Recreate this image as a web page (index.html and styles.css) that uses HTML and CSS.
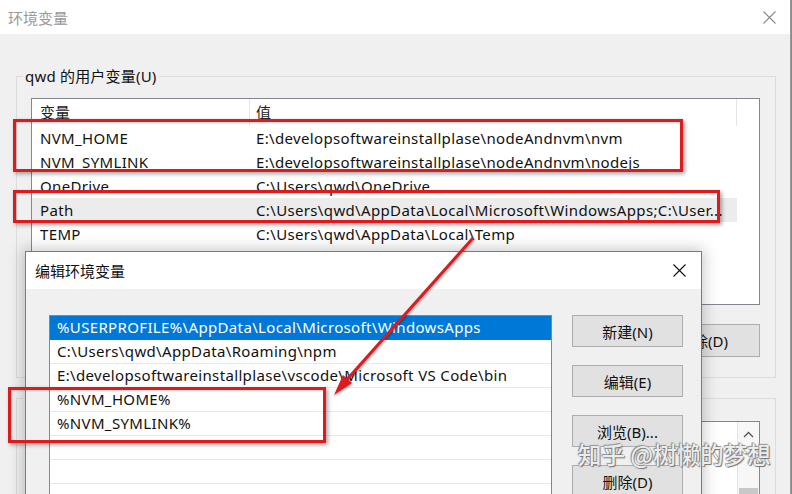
FILE: index.html
```html
<!DOCTYPE html>
<html lang="zh-CN">
<head>
<meta charset="utf-8">
<title>环境变量</title>
<link rel="stylesheet" href="styles.css">
</head>
<body>
<div class="screen">
  <div class="win">
    <div class="titlebar">
      <span class="title">环境变量</span>
      <svg class="x-icon x-gray" width="13" height="13" viewBox="0 0 13 13"><path d="M0.5 0.5L12.5 12.5M12.5 0.5L0.5 12.5"/></svg>
    </div>
    <div class="win-body">
      <div class="group">
        <div class="group-label">qwd 的用户变量(U)</div>
        <div class="listview">
          <div class="lv-head"><div class="c1">变量</div><div class="c2">值</div></div>
          <div class="lv-row"><div class="c1">NVM_HOME</div><div class="c2">E:\developsoftwareinstallplase\nodeAndnvm\nvm</div></div>
          <div class="lv-row"><div class="c1">NVM_SYMLINK</div><div class="c2">E:\developsoftwareinstallplase\nodeAndnvm\nodejs</div></div>
          <div class="lv-row"><div class="c1">OneDrive</div><div class="c2">C:\Users\qwd\OneDrive</div></div>
          <div class="lv-row sel"><div class="c1">Path</div><div class="c2">C:\Users\qwd\AppData\Local\Microsoft\WindowsApps;C:\User...</div></div>
          <div class="lv-row"><div class="c1">TEMP</div><div class="c2">C:\Users\qwd\AppData\Local\Temp</div></div>
        </div>
        <div class="btn-row">
          <button class="btn">新建(N)...</button>
          <button class="btn">编辑(E)...</button>
          <button class="btn">删除(D)</button>
        </div>
      </div>
      <div class="group group2">
        <div class="group-label">系统变量(S)</div>
        <div class="listview lv2">
          <div class="lv2-content"></div>
          <div class="scrollbar">
            <svg class="chev" width="11" height="7" viewBox="0 0 11 7"><path d="M1 6L5.5 1.5L10 6"/></svg>
            <div class="thumb"></div>
          </div>
        </div>
      </div>
    </div>
  </div>

  <div class="dialog">
    <div class="dlg-title">
      <span>编辑环境变量</span>
      <svg class="x-icon" width="13" height="13" viewBox="0 0 13 13"><path d="M0.5 0.5L12.5 12.5M12.5 0.5L0.5 12.5"/></svg>
    </div>
    <div class="dlg-body">
      <div class="dlg-list">
        <div class="dl-row sel">%USERPROFILE%\AppData\Local\Microsoft\WindowsApps</div>
        <div class="dl-row">C:\Users\qwd\AppData\Roaming\npm</div>
        <div class="dl-row">E:\developsoftwareinstallplase\vscode\Microsoft VS Code\bin</div>
        <div class="dl-row">%NVM_HOME%</div>
        <div class="dl-row">%NVM_SYMLINK%</div>
        <div class="dl-row"></div>
        <div class="dl-row"></div>
        <div class="dl-row"></div>
      </div>
      <div class="dlg-btns">
        <button class="btn dbtn">新建(N)</button>
        <button class="btn dbtn">编辑(E)</button>
        <button class="btn dbtn">浏览(B)...</button>
        <button class="btn dbtn">删除(D)</button>
      </div>
    </div>
  </div>

  <div class="mark mark1"></div>
  <div class="mark mark2"></div>
  <div class="mark mark3"></div>

  <svg class="arrow" width="792" height="494" viewBox="0 0 792 494">
    <line x1="473" y1="238" x2="343" y2="384"/>
    <polygon points="334,395 352,383 343,375"/>
  </svg>

  <div class="watermark">知乎 @树懒的梦想</div>
</div>
</body>
</html>
```

FILE: styles.css
```css
* { box-sizing: border-box; }

body {
  margin: 0;
  width: 792px;
  height: 494px;
  overflow: hidden;
  background: #fff;
  font-family: "Noto Sans", "Noto Sans CJK SC", sans-serif;
  font-size: 15px;
  color: #000;
}

.screen {
  position: relative;
  width: 792px;
  height: 494px;
  overflow: hidden;
  background: #8a8a8a;
}

.win {
  width: 791px;
  height: 494px;
  border-right: 1px solid #9a9a9a;
  background: #f0f0f0;
}

.titlebar {
  height: 34px;
  background: #fff;
  display: flex;
  align-items: center;
  justify-content: space-between;
  padding: 0 14px 0 8px;
}

.title {
  color: #9a9a9a;
  font-family: "Noto Sans CJK SC", sans-serif;
}

.x-icon path {
  stroke: #111;
  stroke-width: 1.1;
  fill: none;
}

.x-gray path { stroke: #8a8a8a; }

.win-body { padding-top: 42px; }

.group {
  border: 1px solid #dcdcdc;
  margin: 0 14px 0 16px;
  padding: 0 15px 20px 14px;
}

.group-label {
  width: fit-content;
  margin: -11px 0 0 -8px;
  padding: 0 2px;
  line-height: 20px;
  background: #f0f0f0;
  color: #111;
  letter-spacing: 0.2px;
}

.listview {
  margin-top: 12px;
  height: 207px;
  border: 1px solid #828790;
  background: #fff;
}

.lv-head {
  display: flex;
  width: 705px;
  height: 27px;
  line-height: 27px;
  border-right: 1px solid #e5e5e5;
  color: #222;
}

.lv-head .c1 { border-right: 1px solid #e5e5e5; }

.c1 {
  width: 218px;
  flex: none;
  padding-left: 8px;
  white-space: nowrap;
}

.c2 {
  flex: 1;
  min-width: 0;
  padding-left: 6px;
  white-space: nowrap;
  overflow: hidden;
}

.lv-row {
  display: flex;
  width: 705px;
  height: 24px;
  line-height: 24px;
  color: #111;
  letter-spacing: 0.35px;
}

.lv-row.sel { background: #ececec; }

.btn-row {
  display: flex;
  justify-content: flex-end;
  gap: 10px;
  margin-top: 19px;
}

.btn {
  width: 114px;
  height: 33px;
  margin: 0;
  padding: 0;
  background: #e1e1e1;
  border: 1px solid #adadad;
  font-family: "Noto Sans", "Noto Sans CJK SC", sans-serif;
  font-size: 15px;
  color: #111;
}

.group2 { margin-top: 20px; padding-bottom: 0; border-bottom: none; }

.lv2 {
  margin-top: 13px;
  height: 120px;
  display: flex;
  border-bottom: none;
}

.lv2-content { flex: 1; }

.scrollbar {
  width: 22px;
  flex: none;
  background: #f7f7f7;
  border-left: 1px solid #e3e3e3;
  display: flex;
  flex-direction: column;
  align-items: center;
  padding-top: 9px;
}

.chev path {
  stroke: #555;
  stroke-width: 1.3;
  fill: none;
}

.thumb {
  margin-top: 50px;
  width: 19px;
  height: 40px;
  background: #c8c8c8;
}

/* Edit dialog (window over the main window) */
.dialog {
  position: absolute;
  left: 25px;
  top: 251px;
  width: 677px;
  height: 260px;
  border: 1px solid #7a7a7a;
  background: #f0f0f0;
  box-shadow: 0 0 14px 2px rgba(0, 0, 0, 0.22);
}

.dlg-title {
  height: 37px;
  background: #fff;
  display: flex;
  align-items: center;
  justify-content: space-between;
  padding: 0 15px 0 9px;
  font-family: "Noto Sans CJK SC", sans-serif;
  color: #111;
}

.dlg-body {
  display: flex;
  gap: 20px;
  padding: 26px 18px 0 23px;
}

.dlg-list {
  width: 503px;
  height: 220px;
  border: 1px solid #828790;
  background: #fff;
  flex: none;
}

.dl-row {
  height: 24px;
  line-height: 23px;
  padding-left: 7px;
  border-bottom: 1px solid #e8e8e8;
  white-space: nowrap;
  overflow: hidden;
  color: #111;
  letter-spacing: 0.35px;
}

.dl-row.sel {
  background: #0078d7;
  color: #fff;
  border-bottom-color: #0078d7;
}

.dlg-btns {
  display: flex;
  flex-direction: column;
  gap: 18px;
}

.dbtn {
  width: 111px;
  height: 32px;
}

/* Red annotation boxes */
.mark {
  position: absolute;
  border: 3px solid #dc1b1f;
  box-shadow: 2px 2px 4px rgba(0, 0, 0, 0.35), inset 1px 1px 2px rgba(0, 0, 0, 0.2);
}

.mark1 { left: 13px; top: 119px; width: 670px; height: 53px; }
.mark2 { left: 13px; top: 190px; width: 707px; height: 33px; }
.mark3 { left: 8px; top: 387px; width: 318px; height: 56px; }

.arrow {
  position: absolute;
  left: 0;
  top: 0;
  pointer-events: none;
  filter: drop-shadow(1px 1px 1px rgba(0, 0, 0, 0.35));
}

.arrow line {
  stroke: #dc1b1f;
  stroke-width: 3;
}

.arrow polygon { fill: #dc1b1f; }

.watermark {
  position: absolute;
  left: 578px;
  top: 437px;
  font-family: "Noto Sans CJK SC", sans-serif;
  font-size: 23.5px;
  font-weight: 500;
  color: rgba(255, 255, 255, 0.9);
  text-shadow: 0 0 1px #666, 1px 1px 1px #777, -1px -1px 1px #999;
  white-space: nowrap;
}
```
